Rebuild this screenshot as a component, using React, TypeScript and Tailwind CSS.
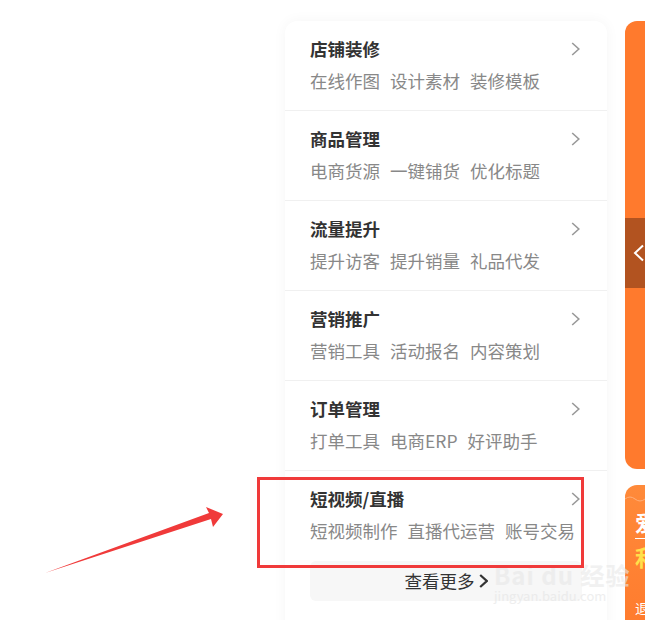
import React from "react";

const menu = [
  { title: "店铺装修", items: ["在线作图", "设计素材", "装修模板"] },
  { title: "商品管理", items: ["电商货源", "一键铺货", "优化标题"] },
  { title: "流量提升", items: ["提升访客", "提升销量", "礼品代发"] },
  { title: "营销推广", items: ["营销工具", "活动报名", "内容策划"] },
  { title: "订单管理", items: ["打单工具", "电商ERP", "好评助手"] },
  { title: "短视频/直播", items: ["短视频制作", "直播代运营", "账号交易"] },
];

const Chevron = ({ color = "#999", w = 1.6 }: { color?: string; w?: number }) => (
  <svg width="9" height="14" viewBox="0 0 9 14" fill="none">
    <polyline points="1.2,1 7.8,7 1.2,13" stroke={color} strokeWidth={w} />
  </svg>
);

const App = () => {
  return (
    <div className="relative w-[645px] h-[620px] overflow-hidden bg-white flex items-start pt-[21px] font-['Microsoft_YaHei','Noto_Sans_CJK_SC',sans-serif]">
      {/* left blank area */}
      <div className="w-[285px] shrink-0" />

      {/* category card */}
      <div className="w-[322px] shrink-0 h-[640px] bg-white rounded-[12px] shadow-[0_0_14px_rgba(0,0,0,0.045)]">
        {menu.map((row, i) => (
          <div
            key={row.title}
            className={
              "pl-[25px] pr-[27px] pt-[18px] pb-[17px] " +
              (i < menu.length - 1 ? "border-b border-[#f0f0f0]" : "")
            }
          >
            <div className="flex items-center justify-between h-[20px]">
              <span className="text-[17.5px] leading-[20px] font-bold text-[#333]">
                {row.title}
              </span>
              <Chevron />
            </div>
            <div className="mt-[10px] flex gap-[10px] text-[17.5px] leading-[24px] text-[#888]">
              {row.items.map((t) => (
                <span key={t}>{t}</span>
              ))}
            </div>
          </div>
        ))}
        <div className="mt-[1px] mx-[25px] h-[40px] rounded-[6px] bg-[#f7f7f7] flex items-center justify-center gap-[4px] text-[17.5px] text-[#333]">
          <span className="leading-[24px]">查看更多</span>
          <Chevron color="#333" w={2.2} />
        </div>
      </div>

      {/* right orange banners */}
      <div className="ml-[18px] w-[200px] shrink-0 flex flex-col gap-[16px]">
        <div className="shrink-0 h-[448px] rounded-[12px] bg-[#ff7a2d] pt-[197px]">
          <div className="h-[70px] bg-[#b25320] flex items-center pl-[8px]">
            <svg width="12" height="18" viewBox="0 0 12 18" fill="none">
              <polyline points="10,1.5 2,9 10,16.5" stroke="#fff" strokeWidth="2" />
            </svg>
          </div>
        </div>
        <div className="shrink-0 h-[200px] rounded-[12px] bg-gradient-to-b from-[#ff8a3a] to-[#ff7528] flex flex-col pl-[10px] pt-[10px]">
          <svg width="190" height="8" viewBox="0 0 190 8" className="-ml-[10px]">
            <path
              d="M0 4 Q5 0 10 4 T20 4 T30 4 T40 4 T50 4 T60 4"
              stroke="#ffb07a"
              strokeWidth="1"
              fill="none"
            />
          </svg>
          <span className="mt-[7px] text-[22px] leading-[22px] font-bold text-white">爱</span>
          <div className="mt-[6px] h-[1px] bg-white" />
          <span className="mt-[6px] text-[22px] leading-[22px] font-bold text-[#ffe04a]">利</span>
          <span className="mt-[33px] text-[14px] leading-[16px] text-white">退</span>
        </div>
      </div>

      {/* watermark */}
      <div className="absolute left-[494px] top-[562px] flex flex-col items-start pointer-events-none opacity-60">
        <span className="text-[24px] leading-[26px] font-bold text-[#e8e8e8] tracking-[1px]">
          Bai du 经验
        </span>
        <span className="text-[13px] leading-[16px] text-[#e4e4e4]">jingyan.baidu.com</span>
      </div>

      {/* red highlight box */}
      <div className="absolute left-[257px] top-[477px] w-[327px] h-[91px] border-[3px] border-[#f03a3a] pointer-events-none" />

      {/* red arrow */}
      <svg
        className="absolute left-0 top-0 pointer-events-none"
        width="645"
        height="620"
        viewBox="0 0 645 620"
      >
        <polygon
          points="45,573 209,513 206,507 223,514 213,527 211,519"
          fill="#f03a3a"
        />
      </svg>
    </div>
  );
};

export default App;
